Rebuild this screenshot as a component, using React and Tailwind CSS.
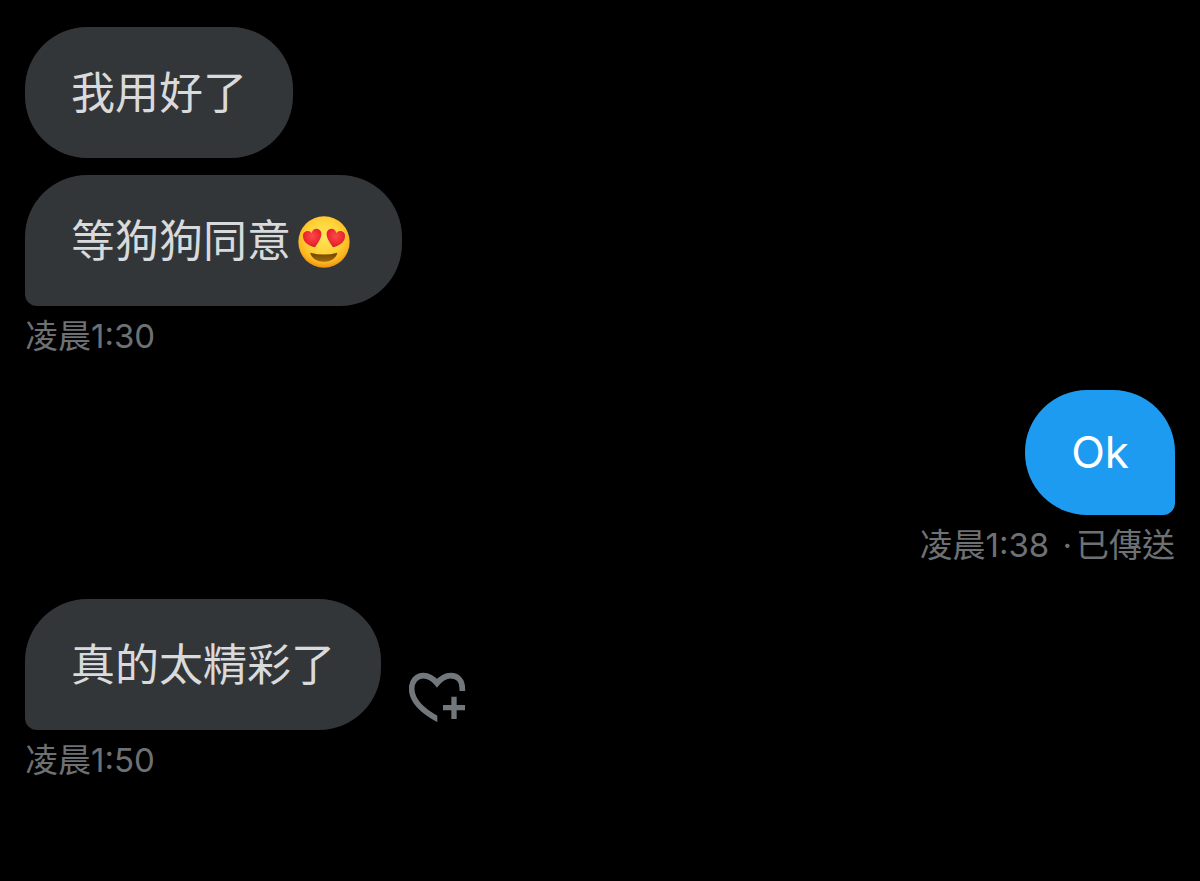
import React from 'react';

const messages = [
  { id: 1, text: '我用好了' },
  { id: 2, text: '等狗狗同意', emoji: true, time: '凌晨1:30' },
  { id: 3, text: 'Ok', sent: true, time: '凌晨1:38', status: '已傳送' },
  { id: 4, text: '真的太精彩了', time: '凌晨1:50', canReact: true },
];

function HeartEyes() {
  return (
    <svg viewBox="0 0 156 156" role="img" aria-label="😍" className="ml-[7px] mr-[6px] h-[52px] w-[52px] shrink-0">
      <defs>
        <radialGradient id="face" cx="50%" cy="40%" r="62%">
          <stop offset="0%" stopColor="#ffe45c" />
          <stop offset="55%" stopColor="#ffd136" />
          <stop offset="82%" stopColor="#fbb41f" />
          <stop offset="100%" stopColor="#e88a10" />
        </radialGradient>
        <radialGradient id="heart" cx="50%" cy="40%" r="65%">
          <stop offset="0%" stopColor="#fb4a4c" />
          <stop offset="65%" stopColor="#ec2730" />
          <stop offset="100%" stopColor="#c9182a" />
        </radialGradient>
        <linearGradient id="mouth" x1="0" y1="0" x2="0" y2="1">
          <stop offset="0%" stopColor="#6d4304" />
          <stop offset="100%" stopColor="#a16a08" />
        </linearGradient>
      </defs>
      <circle cx="78" cy="78" r="77" fill="url(#face)" />
      <path d="M37 110 Q78 121 118 110 C115 127 98 137 78 137 C57 137 40 127 37 110 Z" fill="url(#mouth)" />
      <path
        d="M51 94 C35 90 16 80 15 62 C13 47 30 39 41 51 C44 35 63 34 69 47 C74 62 60 80 51 94 Z"
        fill="url(#heart)"
      />
      <path
        d="M105 94 C121 90 140 80 141 62 C143 47 126 39 115 51 C112 35 93 34 87 47 C82 62 96 80 105 94 Z"
        fill="url(#heart)"
      />
    </svg>
  );
}

function HeartPlusIcon() {
  return (
    <svg viewBox="0 0 171 150" fill="none" className="h-[50px] w-[57px]" aria-hidden="true">
      <defs>
        <clipPath id="heart-edge">
          <path d="M0 0 H171 V58 H85 V150 H0 Z" />
        </clipPath>
      </defs>
      <path
        clipPath="url(#heart-edge)"
        d="M160 57 V50 C160 26 146 11 125 11 C108 11 96 19 84 34 C72 19 60 11 43 11 C22 11 8 28 8 50 C8 88 44 118 84 140 L96 147"
        stroke="currentColor"
        strokeWidth="17"
      />
      <path d="M127 74 H143 V99 H168 V115 H143 V141 H127 V115 H102 V99 H127 Z" fill="currentColor" />
    </svg>
  );
}

function Message({ message }) {
  const { text, emoji, sent, time, status, canReact } = message;

  return (
    <li className={`flex flex-col ${sent ? 'items-end' : 'items-start'} ${time ? 'mb-[31px]' : 'mb-[17px]'}`}>
      <div className="flex items-end gap-7">
        <div
          className={`flex items-center rounded-[62px] px-[46px] text-[44px] ${
            sent
              ? 'bg-[#1d9bf0] py-[35px] leading-[55px] text-white'
              : 'bg-[#333639] pt-9 pb-[34px] leading-[61px] text-[#d9dadb]'
          } ${time ? (sent ? 'rounded-br-xl' : 'rounded-bl-xl') : ''}`}
        >
          <p>{text}</p>
          {emoji && <HeartEyes />}
        </div>
        {canReact && (
          <button type="button" aria-label="新增心情" className="mb-2 text-[#72777b]">
            <HeartPlusIcon />
          </button>
        )}
      </div>
      {time && (
        <p className="mt-2 text-[33px] leading-[45px] text-[#6e7174]">
          {time}
          {status && (
            <>
              {' '}
              <span className="mx-1">·</span>
              {status}
            </>
          )}
        </p>
      )}
    </li>
  );
}

export default function App() {
  return (
    <main className="min-h-screen bg-black px-[25px] pt-[27px] font-[Inter,'Noto_Sans_CJK_TC',sans-serif] font-normal">
      <ul>
        {messages.map((message) => (
          <Message key={message.id} message={message} />
        ))}
      </ul>
    </main>
  );
}
